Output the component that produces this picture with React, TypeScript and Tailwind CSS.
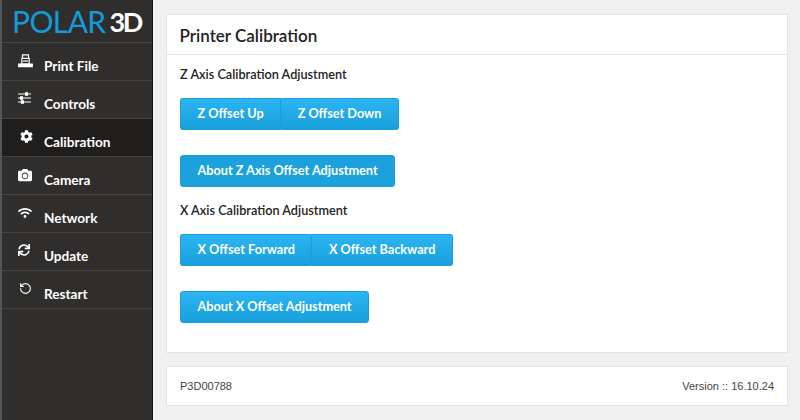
import React from "react";
import { FaCog, FaCamera, FaWifi, FaSync } from "react-icons/fa";
import { RotateCcw } from "lucide-react";

const PrintIcon = () => (
  <svg width="15" height="14" viewBox="0 0 15 14" fill="none" stroke="white" strokeWidth="1.2">
    <path d="M4.5 0.8h6v3.6h-6zM3.8 4.4h7.4v5.6H3.8z" />
    <path d="M0.7 10h13.6v2.6H0.7z" fill="white" />
    <path d="M5 7h5" />
  </svg>
);

const SlidersIcon = () => (
  <svg width="13" height="12" viewBox="0 0 13 12" fill="none" stroke="white" strokeWidth="1">
    <path d="M0 2h13M0 6h13M0 10h13" />
    <rect x="7.5" y="0.7" width="2" height="2.6" fill="#333" />
    <rect x="2.5" y="4.7" width="2" height="2.6" fill="#333" />
    <rect x="3.5" y="8.7" width="2" height="2.6" fill="#333" />
  </svg>
);

const items: { label: string; icon: React.ReactNode; active?: boolean }[] = [
  { label: "Print File", icon: <PrintIcon /> },
  { label: "Controls", icon: <SlidersIcon /> },
  { label: "Calibration", icon: <FaCog size={13} className="ml-[2px]" />, active: true },
  { label: "Camera", icon: <FaCamera size={14} /> },
  { label: "Network", icon: <FaWifi size={14} /> },
  { label: "Update", icon: <FaSync size={12} /> },
  { label: "Restart", icon: <RotateCcw size={13} strokeWidth={2} className="ml-[1px]" /> },
];

const Btn = ({ children, className = "" }: { children: React.ReactNode; className?: string }) => (
  <button className={`h-[32px] px-[16.5px] text-[12.7px] font-bold text-white bg-gradient-to-b from-[#2bb5f2] to-[#18a0dc] border border-[#1a9fd9] ${className}`}>
    {children}
  </button>
);

export default function App() {
  return (
    <div className="w-[800px] h-[420px] overflow-hidden flex bg-[#f0f0f0] font-['Lato','Liberation_Sans',sans-serif] text-[#222]">
      <aside className="w-[153px] shrink-0 h-full border-l-2 border-r border-l-[#555] border-r-[#111] bg-[#2f2e2d] text-white">
        <div className="h-[43px] flex items-center pl-[10px] border-b border-[#444] leading-none whitespace-nowrap">
          <span className="text-[30px] font-normal tracking-[-0.6px] text-[#149bdb]">POLAR</span>
          <span className="text-[27px] font-bold ml-[4px] tracking-[-2.5px]">3D</span>
        </div>
        <nav>
          {items.map((it) => (
            <div
              key={it.label}
              className={`h-[38px] flex border-b border-[#454443] pl-[16px] ${it.active ? "bg-[#1f1e1d]" : ""}`}
            >
              <span className="w-[26px] shrink-0 pt-[11px] flex justify-start items-start">{it.icon}</span>
              <span className="text-[13.6px] font-bold pt-[14px] leading-[18px]">{it.label}</span>
            </div>
          ))}
        </nav>
      </aside>
      <main className="flex-1 pt-[14px] pl-[13px] pr-[12px] flex flex-col">
        <section className="h-[339px] bg-white border border-[#e4e4e4]">
          <h1 className="h-[40px] border-b border-[#e6e6e6] pl-[12.5px] pt-[2px] flex items-center text-[17px] font-semibold text-[#222]">
            Printer Calibration
          </h1>
          <div className="pl-[13px]">
            <p className="text-[12.7px] font-semibold mt-[10px] leading-[18px]">Z Axis Calibration Adjustment</p>
            <div className="flex mt-[15px]">
              <Btn className="rounded-l-[3px] border-r-[#1c9dd6]">Z Offset Up</Btn>
              <Btn className="rounded-r-[3px] border-l-0">Z Offset Down</Btn>
            </div>
            <div className="mt-[25px]">
              <Btn className="rounded-[3px] !bg-none !bg-[#1ba1dc]">About Z Axis Offset Adjustment</Btn>
            </div>
            <p className="text-[12.7px] font-semibold mt-[14px] leading-[18px]">X Axis Calibration Adjustment</p>
            <div className="flex mt-[15px]">
              <Btn className="rounded-l-[3px] border-r-[#1c9dd6]">X Offset Forward</Btn>
              <Btn className="rounded-r-[3px] border-l-0">X Offset Backward</Btn>
            </div>
            <div className="mt-[25px]">
              <Btn className="rounded-[3px]">About X Offset Adjustment</Btn>
            </div>
          </div>
        </section>
        <footer className="h-[40px] mt-[13px] bg-white border border-[#e4e4e4] flex items-center justify-between px-[13px] text-[11px] text-[#444] font-['Liberation_Sans',sans-serif]">
          <span>P3D00788</span>
          <span>Version :: 16.10.24</span>
        </footer>
      </main>
    </div>
  );
}
